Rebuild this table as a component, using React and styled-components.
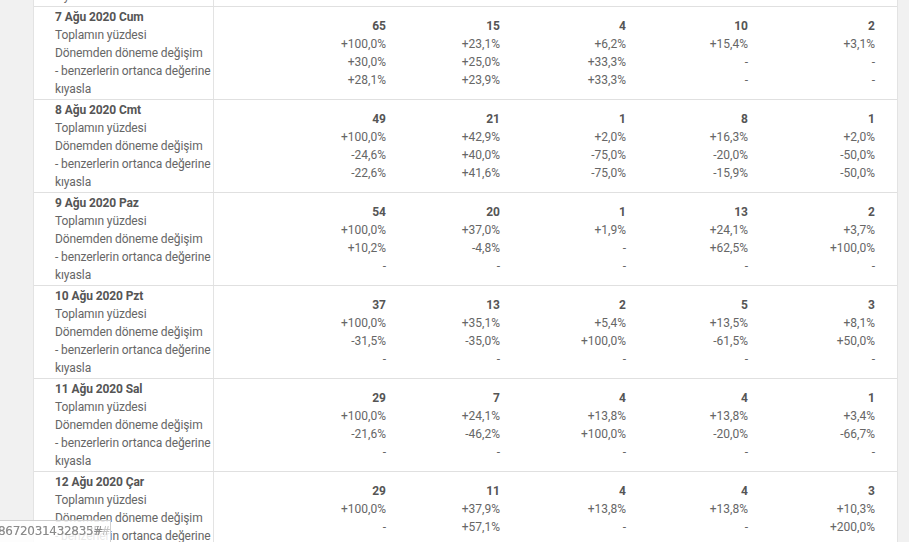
import React from 'react';
import styled, { createGlobalStyle } from 'styled-components';

const GlobalStyle = createGlobalStyle`
  html, body {
    margin: 0;
    padding: 0;
    background: #f1f1f1;
    font-family: Roboto, "Noto Sans", Arial, sans-serif;
    overflow: hidden;
  }
`;

const LABELS = [
  'Toplamın yüzdesi',
  'Dönemden döneme değişim',
  '- benzerlerin ortanca değerine',
  'kıyasla',
];

const rows = [
  {
    date: '6 Ağu 2020 Prş',
    cols: [['', '', '-', '-'], ['', '', '-', '-'], ['', '', '-', '-'], ['', '', '-', '-'], ['', '', '-', '-']],
  },
  {
    date: '7 Ağu 2020 Cum',
    cols: [
      ['65', '+100,0%', '+30,0%', '+28,1%'],
      ['15', '+23,1%', '+25,0%', '+23,9%'],
      ['4', '+6,2%', '+33,3%', '+33,3%'],
      ['10', '+15,4%', '-', '-'],
      ['2', '+3,1%', '-', '-'],
    ],
  },
  {
    date: '8 Ağu 2020 Cmt',
    cols: [
      ['49', '+100,0%', '-24,6%', '-22,6%'],
      ['21', '+42,9%', '+40,0%', '+41,6%'],
      ['1', '+2,0%', '-75,0%', '-75,0%'],
      ['8', '+16,3%', '-20,0%', '-15,9%'],
      ['1', '+2,0%', '-50,0%', '-50,0%'],
    ],
  },
  {
    date: '9 Ağu 2020 Paz',
    cols: [
      ['54', '+100,0%', '+10,2%', '-'],
      ['20', '+37,0%', '-4,8%', '-'],
      ['1', '+1,9%', '-', '-'],
      ['13', '+24,1%', '+62,5%', '-'],
      ['2', '+3,7%', '+100,0%', '-'],
    ],
  },
  {
    date: '10 Ağu 2020 Pzt',
    cols: [
      ['37', '+100,0%', '-31,5%', '-'],
      ['13', '+35,1%', '-35,0%', '-'],
      ['2', '+5,4%', '+100,0%', '-'],
      ['5', '+13,5%', '-61,5%', '-'],
      ['3', '+8,1%', '+50,0%', '-'],
    ],
  },
  {
    date: '11 Ağu 2020 Sal',
    cols: [
      ['29', '+100,0%', '-21,6%', '-'],
      ['7', '+24,1%', '-46,2%', '-'],
      ['4', '+13,8%', '+100,0%', '-'],
      ['4', '+13,8%', '-20,0%', '-'],
      ['1', '+3,4%', '-66,7%', '-'],
    ],
  },
  {
    date: '12 Ağu 2020 Çar',
    cols: [
      ['29', '+100,0%', '-', '-'],
      ['11', '+37,9%', '+57,1%', '-'],
      ['4', '+13,8%', '-', '-'],
      ['4', '+13,8%', '-', '-'],
      ['3', '+10,3%', '+200,0%', '-'],
    ],
  },
];

function App() {
  return (
    <>
      <GlobalStyle />
      <Viewport>
        <Table>
          {rows.map(row => (
            <Row key={row.date}>
              <LabelCell>
                <DateText>{row.date}</DateText>
                {LABELS.map(l => <LabelLine key={l}>{l}</LabelLine>)}
              </LabelCell>
              {row.cols.map((col, i) => (
                <NumCell key={i}>
                  <Total>{col[0]}</Total>
                  {col.slice(1).map((v, j) => <Value key={j}>{v}</Value>)}
                </NumCell>
              ))}
              <Trail />
            </Row>
          ))}
        </Table>
      </Viewport>
      <StatusBar>
        <StatusText>8672031432835#</StatusText>
        <StatusGhost>86720314328335#</StatusGhost>
      </StatusBar>
    </>
  );
}

const Viewport = styled.div`
  height: 542px;
  overflow: hidden;
  padding-left: 33px;
  width: 865px;
`;

const Table = styled.div`
  margin-top: -86px;
  background: #fff;
  border-left: 1px solid #e3e3e3;
  border-right: 1px solid #e3e3e3;
`;

const Row = styled.div`
  display: grid;
  grid-template-columns: 180px 172px 114px 126px 122px 127px 1fr;
  border-bottom: 1px solid #e0e0e0;
  font-size: 12px;
  line-height: 18px;
`;

const LabelCell = styled.div`
  padding: 1px 0 1px 21px;
  border-right: 1px solid #e3e3e3;
  display: flex;
  flex-direction: column;
  white-space: nowrap;
  letter-spacing: -0.1px;
`;

const DateText = styled.div`
  font-weight: 700;
  color: #555;
`;

const LabelLine = styled.div`
  color: #666;
`;

const NumCell = styled.div`
  display: flex;
  flex-direction: column;
  justify-content: center;
  align-items: flex-end;
`;

const Total = styled.div`
  font-weight: 700;
  color: #555;
  min-height: 18px;
`;

const Value = styled.div`
  color: #666;
  min-height: 18px;
`;

const Trail = styled.div``;

const StatusBar = styled.div`
  position: fixed;
  left: 0;
  bottom: 0;
  width: 110px;
  height: 21px;
  background: rgba(255, 255, 255, 0.85);
  border-top: 1px solid #cfcfcf;
  border-right: 1px solid #cfcfcf;
  overflow: hidden;
  font-family: "Segoe UI", "DejaVu Sans", Arial, sans-serif;
  font-size: 12px;
  color: #8a8a8a;
`;

const StatusText = styled.span`
  position: absolute;
  left: -2px;
  top: 3px;
  white-space: nowrap;
  letter-spacing: -0.3px;
`;

const StatusGhost = styled.span`
  position: absolute;
  left: -2px;
  top: 3px;
  white-space: nowrap;
  letter-spacing: -0.3px;
  opacity: 0.5;
`;

export default App;
